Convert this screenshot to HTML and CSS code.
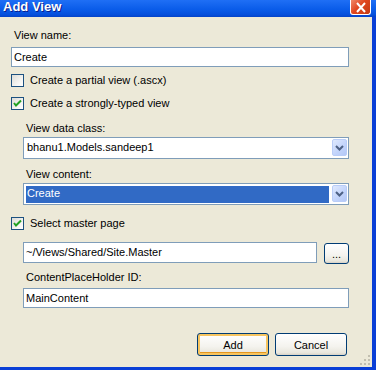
FILE: index.html
```html
<!DOCTYPE html>
<html lang="en">
  <head>
    <meta charset="UTF-8" />
    <title>Add View</title>
    <link rel="stylesheet" href="styles.css">
  </head>
  <body>
    <div class="window">
      <div class="titlebar">
        <span class="title">Add View</span>
        <span class="close-btn">
          <svg width="12" height="11" viewBox="0 0 12 11">
            <path d="M2 1 L10 10 M10 1 L2 10" stroke="#fff" stroke-width="2" fill="none" />
          </svg>
        </span>
      </div>

      <div class="client">
        <label class="field-label">View name:</label>
        <div class="textbox">Create</div>

        <div class="check-row first">
          <span class="checkbox"></span>
          <span>Create a partial view (.ascx)</span>
        </div>
        <div class="check-row second">
          <span class="checkbox checked">
            <svg width="11" height="11" viewBox="0 0 11 11">
              <path d="M2 5 L4 7.5 L9 2.5" stroke="#21a121" stroke-width="2" fill="none" />
            </svg>
          </span>
          <span>Create a strongly-typed view</span>
        </div>

        <div class="group">
          <label class="field-label sub first-label">View data class:</label>
          <div class="combo">
            <span class="combo-text">bhanu1.Models.sandeep1</span>
            <span class="combo-btn">
              <svg width="9" height="6" viewBox="0 0 9 6">
                <path d="M1 1 L4.5 4.5 L8 1" stroke="#4d6185" stroke-width="2" fill="none" />
              </svg>
            </span>
          </div>
          <label class="field-label sub second-label">View content:</label>
          <div class="combo">
            <span class="combo-text selected">Create</span>
            <span class="combo-btn">
              <svg width="9" height="6" viewBox="0 0 9 6">
                <path d="M1 1 L4.5 4.5 L8 1" stroke="#4d6185" stroke-width="2" fill="none" />
              </svg>
            </span>
          </div>
        </div>

        <div class="check-row third">
          <span class="checkbox checked">
            <svg width="11" height="11" viewBox="0 0 11 11">
              <path d="M2 5 L4 7.5 L9 2.5" stroke="#21a121" stroke-width="2" fill="none" />
            </svg>
          </span>
          <span>Select master page</span>
        </div>

        <div class="group">
          <div class="master-row">
            <div class="textbox master">~/Views/Shared/Site.Master</div>
            <button class="xp-btn browse">...</button>
          </div>
          <label class="field-label sub third-label">ContentPlaceHolder ID:</label>
          <div class="textbox placeholder-id">MainContent</div>
        </div>

        <div class="actions">
          <button class="xp-btn default">Add</button>
          <button class="xp-btn">Cancel</button>
        </div>

        <svg class="grip" width="11" height="11" viewBox="0 0 11 11">
          <g fill="#c2bfb0">
            <rect x="8" y="0" width="2" height="2" />
            <rect x="4" y="4" width="2" height="2" />
            <rect x="8" y="4" width="2" height="2" />
            <rect x="0" y="8" width="2" height="2" />
            <rect x="4" y="8" width="2" height="2" />
            <rect x="8" y="8" width="2" height="2" />
          </g>
        </svg>
      </div>
    </div>
  </body>
</html>
```

FILE: styles.css
```css
body {
  margin: 0;
  font-family: "Liberation Sans", Arial, sans-serif;
  font-size: 11px;
  color: #000;
  background-color: #ece9d8;
}
.window {
  width: 376px;
  height: 370px;
  display: flex;
  flex-direction: column;
}
.titlebar {
  height: 17px;
  display: flex;
  justify-content: space-between;
  align-items: flex-start;
  background: linear-gradient(#1f6ff5, #0a5ce9 55%, #0550dd 85%, #0443c8);
  padding: 0 5px 0 3px;
}
.title {
  color: #fff;
  font-weight: bold;
  font-size: 13px;
  line-height: 14px;
  text-shadow: 1px 1px 0 #0a1e8c;
}
.close-btn {
  width: 19px;
  height: 14px;
  display: flex;
  justify-content: center;
  align-items: center;
  background: linear-gradient(135deg, #f08a6a, #e0461f 45%, #c23a13);
  border: 1px solid #fff;
  border-top: none;
  border-radius: 0 0 3px 3px;
}
.client {
  flex: 1;
  position: relative;
  padding: 12px 23px 0 11px;
  border-right: 4px solid #0a3fd6;
  border-bottom: 3px solid #0a3fd6;
}
.field-label {
  display: block;
  line-height: 13px;
  padding-left: 3px;
}
.textbox {
  height: 18px;
  line-height: 18px;
  margin-top: 5px;
  padding-left: 2px;
  background-color: #fff;
  border: 1px solid #7f9db9;
}
.check-row {
  display: flex;
  align-items: center;
  gap: 6px;
  height: 13px;
  line-height: 13px;
}
.check-row.first {
  margin-top: 7px;
}
.check-row.second {
  margin-top: 10px;
}
.check-row.third {
  margin-top: 12px;
}
.checkbox {
  width: 11px;
  height: 11px;
  border: 1px solid #1c5180;
  background: linear-gradient(135deg, #dcdcd7, #f7f7f5 70%, #fff);
  display: flex;
}
.group {
  margin-left: 12px;
}
.first-label {
  margin-top: 12px;
}
.second-label {
  margin-top: 9px;
}
.third-label {
  margin-top: 7px;
}
.combo {
  height: 18px;
  margin-top: 2px;
  padding: 1px;
  display: flex;
  background-color: #fff;
  border: 1px solid #7f9db9;
}
.combo-text {
  flex: 1;
  line-height: 14px;
  margin: 1px 3px 0 1px;
  padding-left: 1px;
}
.combo-text.selected {
  background-color: #316ac5;
  color: #fff;
}
.combo-btn {
  width: 13px;
  height: 15px;
  display: flex;
  justify-content: center;
  align-items: center;
  background: linear-gradient(135deg, #dfe9fe, #c1d3fb 60%, #b4c8f6);
  border: 1px solid #b9cdf8;
  border-radius: 2px;
}
.master-row {
  margin-top: 12px;
  display: flex;
  gap: 7px;
}
.textbox.master {
  flex: 1;
  margin-top: 0;
  height: 19px;
  line-height: 19px;
}
.textbox.placeholder-id {
  margin-top: 4px;
}
.xp-btn {
  font-family: "Liberation Sans", Arial, sans-serif;
  font-size: 11px;
  color: #000;
  border: 1px solid #003c74;
  border-radius: 3px;
  background: linear-gradient(#ffffff, #f4f3ee 60%, #e8e6dc 90%, #d6d0c5);
  padding: 0;
}
.browse {
  width: 25px;
  height: 21px;
  margin-top: 1px;
}
.actions {
  display: flex;
  justify-content: flex-end;
  gap: 6px;
  margin-top: 25px;
  margin-right: 2px;
}
.actions .xp-btn {
  width: 72px;
  height: 23px;
}
.xp-btn.default {
  box-shadow: inset 0 0 0 2px #f7c560, inset 0 -1px 0 2px #e5971f;
}
.grip {
  position: absolute;
  right: 1px;
  bottom: 1px;
}
```
